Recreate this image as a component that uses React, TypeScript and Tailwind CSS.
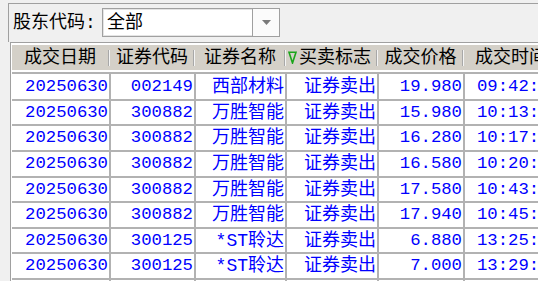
import React from "react";

type Row = {
  date: string;
  code: string;
  name: string;
  side: string;
  price: string;
  time: string;
  buy?: boolean;
};

const rows: Row[] = [
  { date: "20250630", code: "002149", name: "西部材料", side: "证券卖出", price: "19.980", time: "09:42:17" },
  { date: "20250630", code: "300882", name: "万胜智能", side: "证券卖出", price: "15.980", time: "10:13:05" },
  { date: "20250630", code: "300882", name: "万胜智能", side: "证券卖出", price: "16.280", time: "10:17:42" },
  { date: "20250630", code: "300882", name: "万胜智能", side: "证券卖出", price: "16.580", time: "10:20:31" },
  { date: "20250630", code: "300882", name: "万胜智能", side: "证券卖出", price: "17.580", time: "10:43:26" },
  { date: "20250630", code: "300882", name: "万胜智能", side: "证券卖出", price: "17.940", time: "10:45:58" },
  { date: "20250630", code: "300125", name: "*ST聆达", side: "证券卖出", price: "6.880", time: "13:25:09" },
  { date: "20250630", code: "300125", name: "*ST聆达", side: "证券卖出", price: "7.000", time: "13:29:44" },
  { date: "20250630", code: "300882", name: "万胜智能", side: "证券买入", price: "17.200", time: "13:40:12", buy: true },
];

// row heights incl. the 2px bottom grid line
const heights = ["h-[27px]", "h-[25px]", "h-[26px]", "h-[26px]", "h-[25px]", "h-[26px]", "h-[25px]", "h-[26px]", "h-[26px]"];

function HeadCell({ w, children, align = "center" }: { w: string; children: React.ReactNode; align?: "center" | "left" }) {
  return (
    <div className={`${w} shrink-0 flex items-center h-full`}>
      <div className={`flex-1 flex items-center ${align === "center" ? "justify-center" : "justify-start pl-[1px]"}`}>{children}</div>
      <div className="w-[2px] h-[16px] border-l border-[#a8a8a8] border-r border-r-[#f4f4f4] mr-[1px]" />
    </div>
  );
}

function SellMark() {
  return (
    <svg width="9" height="13" viewBox="0 0 9 13" className="mr-[2px]">
      <path d="M1 1.2 H8 L4.5 12 Z" fill="none" stroke="#1aa51a" strokeWidth="1.6" strokeLinejoin="miter" />
    </svg>
  );
}

export default function App() {
  return (
    <div
      className="w-[538px] h-[281px] overflow-hidden bg-[#f0f0f0] text-black"
      style={{ fontFamily: '"Liberation Mono", "Noto Sans CJK SC", monospace' }}
    >
      {/* toolbar */}
      <div className="ml-[8px] mt-[3px] h-[39px] border-l border-t border-[#a0a0a0] flex items-start pt-[4px] pl-[4px]">
        <div className="w-[89px] h-[29px] flex items-center text-[18px] leading-none">股东代码:</div>
        <div className="w-[178px] h-[29px] border border-[#a0a0a0] bg-white flex shadow-[inset_0_0_0_1px_#e4e4e4]">
          <div className="flex-1 flex items-center pl-[4px] text-[18px] leading-none">全部</div>
          <div className="w-[27px] border-l border-[#a0a0a0] bg-[#fbfbfb] flex items-center justify-center">
            <svg width="9" height="5" viewBox="0 0 9 5">
              <path d="M0 0 H9 L4.5 5 Z" fill="#7a7a7a" />
            </svg>
          </div>
        </div>
      </div>

      {/* table */}
      <div className="ml-[10px] border-l border-t border-[#a0a0a0] bg-white pl-[1px] pt-[2px]">
        <div className="h-[25px] bg-[#d4d0c8] flex text-[18px] leading-none">
          <HeadCell w="w-[99px]">成交日期</HeadCell>
          <HeadCell w="w-[85px]">证券代码</HeadCell>
          <HeadCell w="w-[91px]">证券名称</HeadCell>
          <HeadCell w="w-[92px]" align="left">
            <SellMark />
            买卖标志
          </HeadCell>
          <HeadCell w="w-[86px]">成交价格</HeadCell>
          <div className="flex-1 flex items-center pl-[10px] whitespace-nowrap">成交时间</div>
        </div>
        <div className="h-[2px]" />
        <div className="border-t-2 border-[#b2b2b2]">
          {rows.map((r, i) => (
            <div
              key={i}
              className={`${heights[i]} flex border-b-2 border-[#b2b2b2] leading-none whitespace-nowrap ${
                r.buy ? "text-[#ff0000]" : "text-[#0000ff]"
              }`}
            >
              <div className="w-[99px] shrink-0 border-r-2 border-[#b2b2b2] flex items-center justify-end pr-[1px] text-[17.3px]">
                {r.date}
              </div>
              <div className="w-[85px] shrink-0 border-r-2 border-[#b2b2b2] flex items-center justify-end pr-[1px] text-[17.3px]">
                {r.code}
              </div>
              <div className="w-[91px] shrink-0 border-r-2 border-[#b2b2b2] flex items-center justify-end pr-[1px] text-[18px]">
                {r.name}
              </div>
              <div className="w-[92px] shrink-0 border-r-2 border-[#b2b2b2] flex items-center justify-end pr-[1px] text-[18px]">
                {r.side}
              </div>
              <div className="w-[86px] shrink-0 border-r-2 border-[#b2b2b2] flex items-center justify-end pr-[1px] text-[17.3px]">
                {r.price}
              </div>
              <div className="flex-1 flex items-center pl-[12px] text-[17.3px]">{r.time}</div>
            </div>
          ))}
        </div>
      </div>
    </div>
  );
}
